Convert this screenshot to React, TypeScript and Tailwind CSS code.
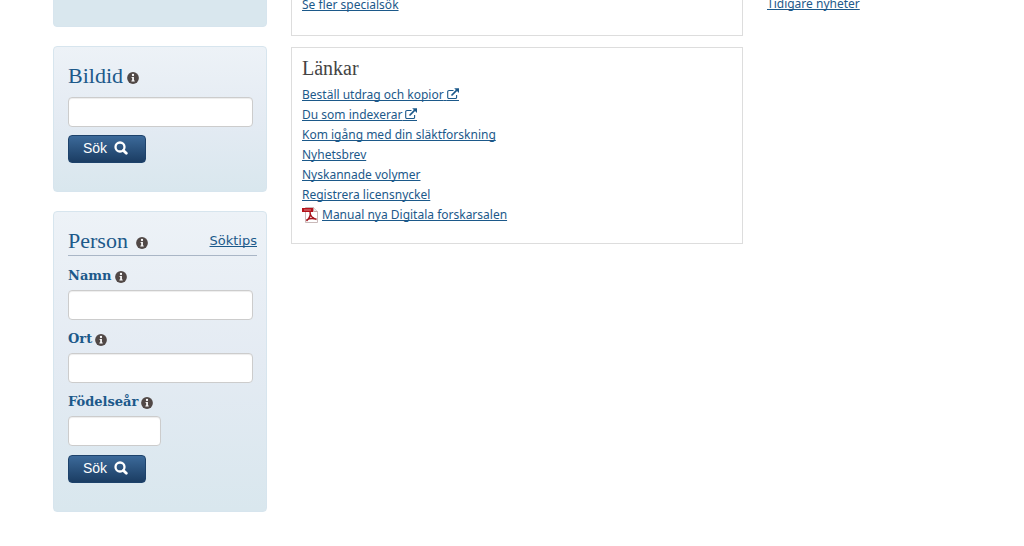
import React from "react";

const linkClass = "text-[#1c598a] underline [text-decoration-skip-ink:none] hover:text-[#0d3b63]";

const links = [
  { text: "Beställ utdrag och kopior", external: true },
  { text: "Du som indexerar", external: true },
  { text: "Kom igång med din släktforskning" },
  { text: "Nyhetsbrev" },
  { text: "Nyskannade volymer" },
  { text: "Registrera licensnyckel" },
  { text: "Manual nya Digitala forskarsalen", pdf: true },
];

function InfoIcon() {
  return (
    <svg className="h-3 w-3 shrink-0" viewBox="0 0 12 12" aria-hidden="true">
      <circle cx="6" cy="6" r="5.9" fill="#514846" />
      <circle cx="6" cy="3" r="1.15" fill="#fff" />
      <path d="M4.5 4.9h2.4v3.7h.8v1H4.4v-1h.8V5.8h-.7z" fill="#fff" />
    </svg>
  );
}

function SearchIcon() {
  return (
    <svg className="h-[14px] w-[14px]" viewBox="0 0 14 14" fill="none" stroke="#fff" aria-hidden="true">
      <circle cx="6" cy="6" r="4.5" strokeWidth="2.3" />
      <path d="M9.4 9.4l2.9 2.9" strokeWidth="2.8" strokeLinecap="round" />
    </svg>
  );
}

function ExternalIcon() {
  return (
    <svg className="inline-block h-[14px] w-3 align-[-3px]" viewBox="0 0 12 14" fill="none" stroke="#1c598a" aria-hidden="true">
      <path d="M6.5 2.5H2A1.3 1.3 0 0 0 .7 3.8V9A1.3 1.3 0 0 0 2 10.500h6.300A1.300 1.300 0 0 0 9.600 9V7" strokeWidth="1.1" />
      <path d="M4.5 7.5L9.8 2.2" strokeWidth="1.7" />
      <path d="M7.2.3H12v4.800z" fill="#1c598a" stroke="none" />
      <path d="M0 12.500h12" />
    </svg>
  );
}

function PdfIcon() {
  return (
    <svg className="h-4 w-4 shrink-0" viewBox="0 0 16 16" aria-hidden="true">
      <path d="M3.5.5h8l4 4v11h-12z" fill="#fff" stroke="#c9b9b9" />
      <path d="M11.5.5v4h4" fill="#eee" stroke="#c9a5a5" />
      <path d="M0 1h11v4H0z" fill="#b5121b" />
      <path d="M2 3h7" stroke="#d98a8d" />
      <path
        d="M8 5c1 3-.8 6.500-3.500 9M8 5.500c.3 3 2.800 5.800 6.500 7M4.500 13c2.500-1.500 6-2 10-.8"
        fill="none"
        stroke="#a5141c"
        strokeWidth="1.5"
      />
    </svg>
  );
}

function Panel({ children }: { children?: React.ReactNode }) {
  return (
    <section className="rounded border border-[#d7e5ee] bg-linear-to-b from-[#edf2f7] via-[#e4ebf3] to-[#d9e7ee] pt-[15px] pr-[9px] pb-7 pl-[14px]">
      {children}
    </section>
  );
}

function TextInput({ id, short }: { id: string; short?: boolean }) {
  return (
    <input
      id={id}
      type="text"
      className={`block h-[30px] rounded border border-[#ccc] bg-white px-2 text-sm shadow-[inset_0_1px_1px_rgba(0,0,0,0.075)] outline-none focus:border-[#66afe9] ${
        short ? "w-[93px]" : "w-[185px]"
      }`}
    />
  );
}

function SearchButton() {
  return (
    <button
      type="submit"
      className="mt-2 flex h-7 w-[78px] items-center gap-[7px] rounded border border-[#1d426b] bg-linear-to-b from-[#3c6a9a] to-[#1b3d63] pb-[2px] pl-[14px] font-['Liberation_Sans',sans-serif] text-sm text-white"
    >
      Sök
      <SearchIcon />
    </button>
  );
}

function Field({ id, label, short }: { id: string; label: string; short?: boolean }) {
  return (
    <div className="mb-[9px]">
      <label
        htmlFor={id}
        className="mb-1 flex h-5 items-center gap-[3px] font-['DejaVu_Serif',serif] text-[13px] font-bold text-[#1c598a]"
      >
        {label}
        <span className="pt-[2px]">
          <InfoIcon />
        </span>
      </label>
      <TextInput id={id} short={short} />
    </div>
  );
}

export default function App() {
  return (
    <div className="overflow-hidden bg-white font-['Noto_Sans',sans-serif] text-xs">
      <main className="-mt-10 flex items-start gap-6 px-[53px] pb-9">
        <div className="flex w-[214px] shrink-0 flex-col gap-[19px]">
          <section className="h-[67px] rounded border border-[#d7e5ee] bg-[#d9e7ee]" />

          <Panel>
            <form onSubmit={(e) => e.preventDefault()}>
              <label
                htmlFor="bildid"
                className="mb-[7px] flex h-7 items-center gap-1 font-['Liberation_Serif',serif] text-[22px] text-[#1c598a]"
              >
                Bildid
                <span className="pt-1">
                  <InfoIcon />
                </span>
              </label>
              <TextInput id="bildid" />
              <SearchButton />
            </form>
          </Panel>

          <Panel>
            <form onSubmit={(e) => e.preventDefault()}>
              <div className="mb-[10px] flex h-[29px] items-center justify-between border-b border-[#a9b6c6]">
                <h2 className="flex items-center gap-2 font-['Liberation_Serif',serif] text-[22px] text-[#1c598a]">
                  Person
                  <span className="pt-1">
                    <InfoIcon />
                  </span>
                </h2>
                <a href="#soktips" className={`${linkClass} font-['DejaVu_Sans',sans-serif] text-[13px]`}>
                  Söktips
                </a>
              </div>
              <Field id="namn" label="Namn" />
              <Field id="ort" label="Ort" />
              <Field id="fodelsear" label="Födelseår" short />
              <SearchButton />
            </form>
          </Panel>
        </div>

        <div className="flex flex-[452] flex-col gap-[11px]">
          <section className="border border-[#ddd] px-[10px] pt-[34px] pb-5">
            <a href="#specialsok" className={`${linkClass} block leading-5`}>
              Se fler specialsök
            </a>
          </section>

          <section className="border border-[#ddd] px-[10px] pt-2 pb-[18px]">
            <h2 className="mb-[5px] font-['Liberation_Serif',serif] text-xl leading-6 text-[#444]">Länkar</h2>
            <ul>
              {links.map((link) => (
                <li key={link.text} className="flex h-5 items-center gap-1 leading-5">
                  {link.pdf && <PdfIcon />}
                  <a href="#lankar" className={linkClass}>
                    {link.text}
                    {link.external && (
                      <>
                        {" "}
                        <ExternalIcon />
                      </>
                    )}
                  </a>
                </li>
              ))}
            </ul>
          </section>
        </div>

        <aside className="flex-[204] pt-[34px]">
          <a href="#nyheter" className={`${linkClass} leading-5`}>
            Tidigare nyheter
          </a>
        </aside>
      </main>
    </div>
  );
}
